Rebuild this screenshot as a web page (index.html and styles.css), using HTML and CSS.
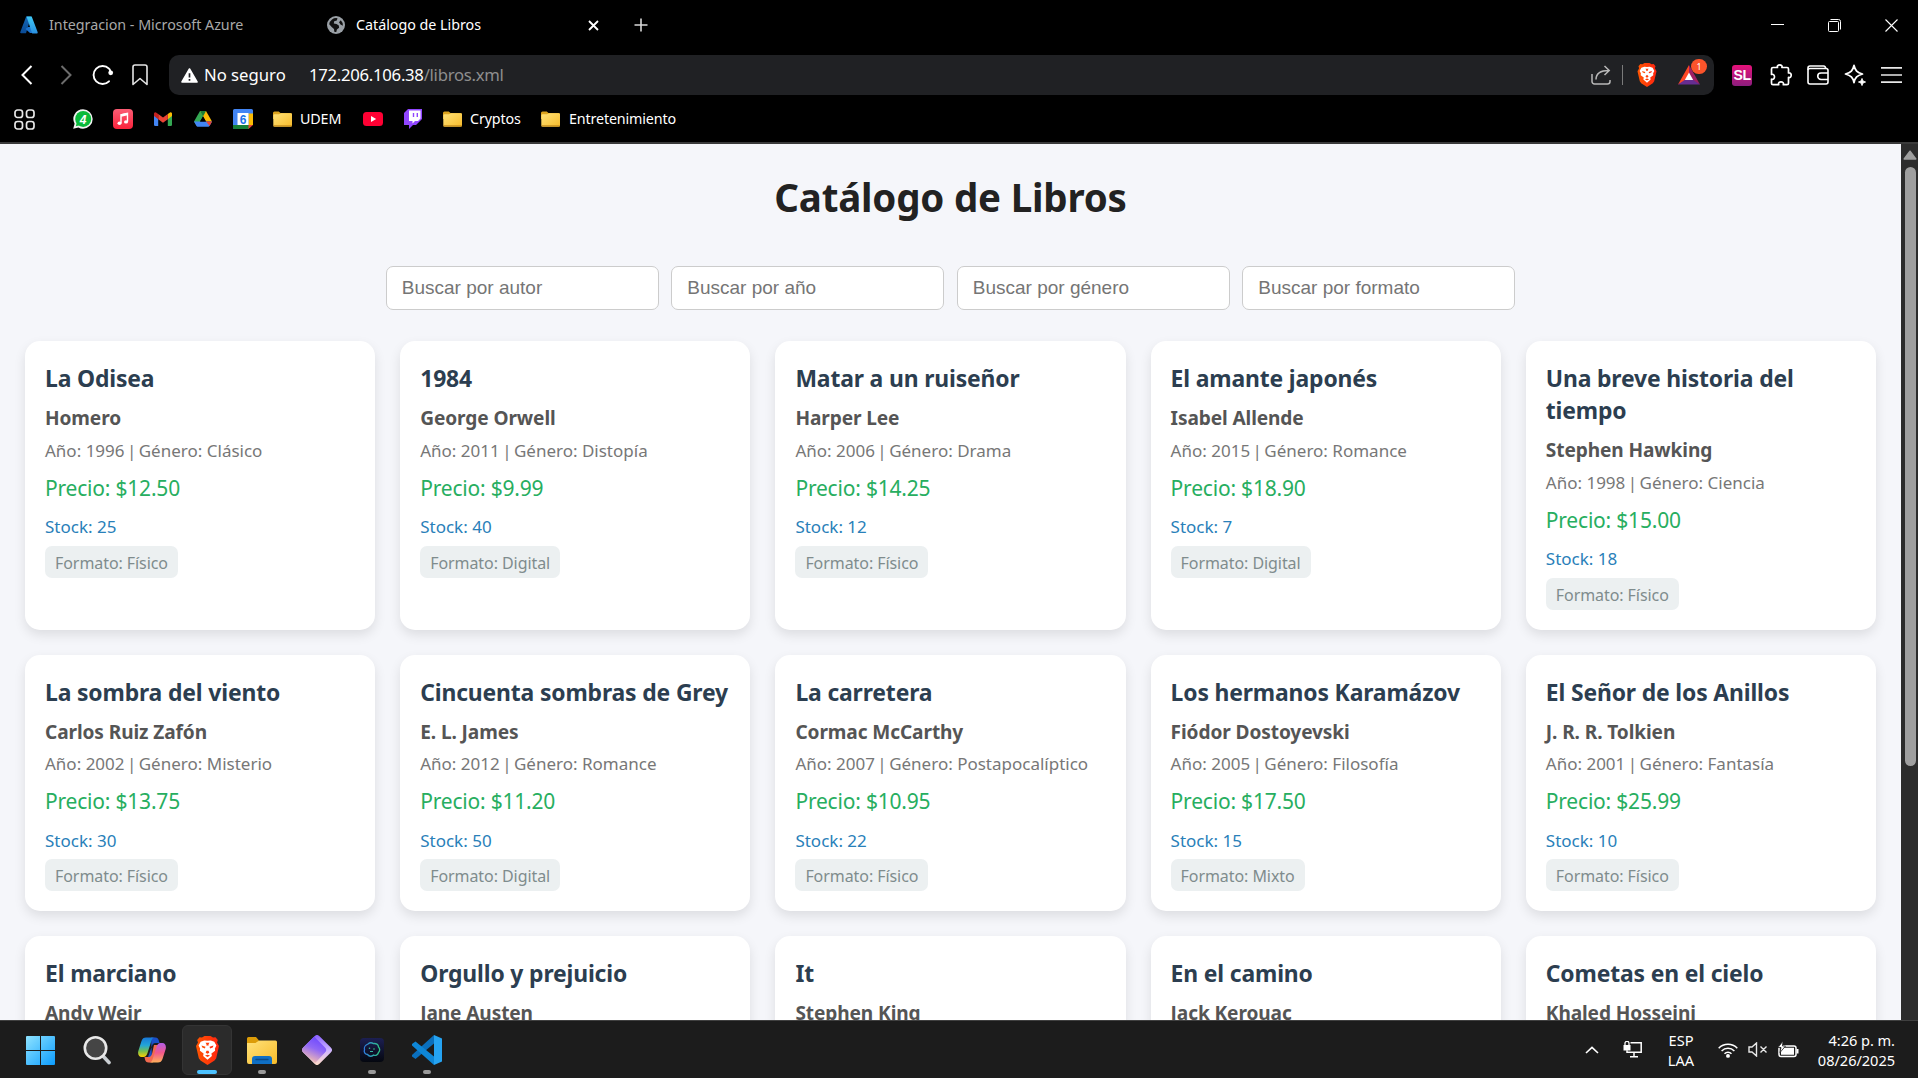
FILE: index.html
```html
<!DOCTYPE html>
<html lang="es">
<head>
<meta charset="utf-8">
<title>Catálogo de Libros</title>
<link rel="stylesheet" href="styles.css">
</head>
<body>
<svg class="defs" aria-hidden="true">
  <defs>
    <linearGradient id="azL" x1="0" y1="0" x2="0" y2="1"><stop offset="0" stop-color="#1568b8"/><stop offset="1" stop-color="#0a4a94"/></linearGradient>
    <linearGradient id="azR" x1="0" y1="0" x2="0" y2="1"><stop offset="0" stop-color="#3fc9f5"/><stop offset="1" stop-color="#2a8fe0"/></linearGradient>
    <linearGradient id="music" x1="0" y1="0" x2="0" y2="1"><stop offset="0" stop-color="#fb5c74"/><stop offset="1" stop-color="#fa233b"/></linearGradient>
    <linearGradient id="fold" x1="0" y1="0" x2="1" y2="1"><stop offset="0" stop-color="#ffe27a"/><stop offset="1" stop-color="#f6bb2a"/></linearGradient>
    <linearGradient id="win" x1="0" y1="0" x2="1" y2="1"><stop offset="0" stop-color="#8fe3ff"/><stop offset="1" stop-color="#0c9dff"/></linearGradient>
    <linearGradient id="brave" x1="0" y1="0" x2="1" y2="0"><stop offset="0" stop-color="#ff5601"/><stop offset="1" stop-color="#ff2410"/></linearGradient>
    <linearGradient id="cpL" x1="0" y1="0" x2="0" y2="1"><stop offset="0" stop-color="#1878d8"/><stop offset=".4" stop-color="#22a5d8"/><stop offset=".7" stop-color="#74bf50"/><stop offset="1" stop-color="#ffd000"/></linearGradient>
    <linearGradient id="cpR" x1="0" y1="0" x2="0" y2="1"><stop offset="0" stop-color="#b35de8"/><stop offset=".5" stop-color="#f2588b"/><stop offset="1" stop-color="#ffb05a"/></linearGradient>
    <linearGradient id="diaR" x1="0" y1="0" x2="0" y2="1"><stop offset="0" stop-color="#8a62ff"/><stop offset=".5" stop-color="#cdb4ff"/><stop offset="1" stop-color="#ffdcc8"/></linearGradient>
    <linearGradient id="diaL" x1=".7" y1="0" x2=".3" y2="1"><stop offset="0" stop-color="#6a45ff"/><stop offset=".45" stop-color="#9068f5"/><stop offset="1" stop-color="#ffc8a8"/></linearGradient>
    <linearGradient id="pet" x1="0" y1="0" x2="0" y2="1"><stop offset="0" stop-color="#1c1f52"/><stop offset="1" stop-color="#04070f"/></linearGradient>
    <linearGradient id="petL" x1="0" y1="0" x2="1" y2="0"><stop offset="0" stop-color="#2f7de0"/><stop offset="1" stop-color="#2fc583"/></linearGradient>
    <symbol id="lion" viewBox="0 0 24 29">
      <path d="M6.500 1.500 9 0h6l2.500 1.500L20 1.300 22.300 4l-.8 2.400L23.500 10l-2.800 12.200-1.700 2.300L12 29l-7-4.500-1.700-2.300L.5 10l2-3.600L1.700 4 4 1.300z" fill="url(#brave)"/>
      <path d="M12 4.800 15.200 4.400 18.800 5.800 20.900 9.600 19.400 12.500 19.600 14.700 15.900 17.600 16.400 20 12 23.800 7.600 20 8.100 17.600 4.400 14.700 4.600 12.500 3.100 9.600 5.200 5.800 8.800 4.400z" fill="#fff"/>
      <path d="M6 9.600 10 10.800l-.6 1.600-2.600-.8zM18 9.600 14 10.800l.6 1.600 2.600-.8zM10 6.800h4l-1 1.500.2 1.200h-2.400l.2-1.200zM11 14.800h2l.8 1.900-1.800 1.100-1.800-1.100zM9.500 19.500l2.500-.8 2.500.8-2.500 1.500z" fill="url(#brave)"/>
    </symbol>
    <symbol id="folder" viewBox="0 0 19 16">
      <path d="M0 2a1.500 1.500 0 0 1 1.500-1.500h4.200L7.500 2H17.500A1.500 1.500 0 0 1 19 3.500V8H0z" fill="#dca31e"/>
      <path d="M.3 4.500A1.200 1.200 0 0 1 1.500 3.300H6L8 2.200h9.700A1.200 1.200 0 0 1 19 3.400v11A1.500 1.500 0 0 1 17.500 15.800H1.800A1.500 1.500 0 0 1 .3 14.300z" fill="url(#fold)"/>
      <path d="M.5 14.800h18.300" stroke="#c99020" stroke-width="1.200"/>
    </symbol>
  </defs>
</svg>

<header class="browser">
  <div class="tabstrip">
    <div class="tab">
      <svg width="18" height="18" viewBox="0 0 18 18"><path d="M6.200.5h5L6 17.300H1.200A1 1 0 0 1 .3 16z" fill="url(#azL)"/><path d="M8 11h6l2 6H10l-4.500-4z" fill="#1d74cf"/><path d="M6.500.5h5.200l6 15.800a1 1 0 0 1-1 1.200h-4.500z" fill="url(#azR)"/></svg>
      <span class="tab-title">Integracion - Microsoft Azure</span>
    </div>
    <div class="tab tab-active">
      <svg width="18" height="18" viewBox="0 0 18 18"><circle cx="9" cy="9" r="9" fill="#9aa0a6"/><path d="M10.500 2.200 9.800 4.500 7.200 5.200 6.800 7.500 9.500 8l2.300 1.500.3 2.300-2.200 1.700L9.300 16a7 7 0 0 1-2-.3L7 13 4.700 11 2.200 8.300A7 7 0 0 1 10.500 2.200zM13.800 4.200 12 6.200l1.500 2.300 2.400 1.300A7 7 0 0 0 13.800 4.200z" fill="#111"/></svg>
      <span class="tab-title">Catálogo de Libros</span>
      <svg class="tab-close" width="11" height="11" viewBox="0 0 11 11"><path d="M1 1l9 9M10 1l-9 9" stroke="#fff" stroke-width="1.800"/></svg>
    </div>
    <svg class="new-tab" width="14" height="14" viewBox="0 0 14 14"><path d="M7 .5v13M.5 7h13" stroke="#d8d8d8" stroke-width="1.600"/></svg>
    <div class="window-controls">
      <svg width="13" height="13" viewBox="0 0 13 13"><path d="M0 5.500h13" stroke="#fff"/></svg>
      <svg width="13" height="13" viewBox="0 0 13 13" fill="none" stroke="#fff"><rect x=".5" y="2.500" width="10" height="10" rx="1"/><path d="M2.500.5h8a2 2 0 0 1 2 2v8"/></svg>
      <svg width="13" height="13" viewBox="0 0 13 13"><path d="M.5.5l12 12M12.500.5l-12 12" stroke="#fff" stroke-width="1.100"/></svg>
    </div>
  </div>

  <div class="toolbar">
    <div class="nav">
      <svg width="12" height="20" viewBox="0 0 12 20"><path d="M10.500 1 1.500 10l9 9" fill="none" stroke="#fff" stroke-width="2"/></svg>
      <svg width="12" height="20" viewBox="0 0 12 20"><path d="M1.500 1l9 9-9 9" fill="none" stroke="#6c6c6c" stroke-width="2"/></svg>
      <svg width="22" height="20" viewBox="0 0 22 20"><path d="M17 3.700A9 9 0 1 0 17 16.300M17.500 4.200 19 7.500" fill="none" stroke="#fff" stroke-width="1.900" stroke-linecap="round"/><circle cx="18.700" cy="7.800" r="2.400" fill="#fff"/></svg>
      <svg width="16" height="22" viewBox="0 0 16 22"><path d="M1 3a2 2 0 0 1 2-2h10a2 2 0 0 1 2 2v17.500L8 14.500 1 20.500z" fill="none" stroke="#e4e4e4" stroke-width="1.600" stroke-linejoin="round"/></svg>
    </div>
    <div class="omnibox">
      <svg width="17" height="15" viewBox="0 0 17 15"><path d="M8.500 1 16 14H1z" fill="#fff" stroke="#fff" stroke-width="1.600" stroke-linejoin="round"/><path d="M8.500 5.300v4.200M8.500 11v1.800" stroke="#202124" stroke-width="1.700"/></svg>
      <span class="insecure">No seguro</span>
      <span class="url"><span class="host">172.206.106.38</span>/libros.xml</span>
      <div class="omni-actions">
        <svg width="20" height="20" viewBox="0 0 20 20" fill="none" stroke="#b8b8b8" stroke-width="1.500"><path d="M1 9v7.500A2.500 2.500 0 0 0 3.500 19h13a2.500 2.500 0 0 0 2.500-2.500V15"/><path d="M5 14.500C5 8.500 9 5.500 18 5.500M13.500 1l4.700 4.500-4.700 4.500"/></svg>
        <span class="divider"></span>
        <svg class="shield" width="20" height="24"><use href="#lion" width="20" height="24"/></svg>
        <div class="rewards">
          <svg width="22" height="20" viewBox="0 0 22 20"><path d="M11 0 0 19.500 11 14z" fill="#ff4724"/><path d="M11 0 22 19.500 11 14z" fill="#9e1f63"/><path d="M0 19.500h22L11 12z" fill="#662d91"/><path d="M11 7.500 15.200 15H6.800z" fill="#fff"/></svg>
          <span class="badge">1</span>
        </div>
      </div>
    </div>
    <div class="extensions">
      <span class="sl-ext">SL</span>
      <svg width="22" height="22" viewBox="0 0 22 22" fill="none" stroke="#fff" stroke-width="1.700" stroke-linejoin="round"><path d="M3 3.500H7.500C6.800 1.800 8.200.9 9.700.9s2.900.9 2.200 2.600H17a1.500 1.500 0 0 1 1.500 1.500V9c1.700-.6 2.700.8 2.700 2.200s-1 2.800-2.700 2.200v5.800A1.500 1.500 0 0 1 17 20.700h-3.700c.6-1.900-.8-2.900-2.300-2.900s-2.900 1-2.300 2.900H3a1.500 1.500 0 0 1-1.500-1.500v-4c1.900.6 3-.8 3-2.400s-1.100-3-3-2.400V5A1.500 1.500 0 0 1 3 3.500z"/></svg>
      <svg width="22" height="20" viewBox="0 0 22 20" fill="none" stroke="#fff" stroke-width="1.600"><rect x="1" y="3.500" width="20" height="15.500" rx="2"/><path d="M1 5V3a2 2 0 0 1 2-2h13.500a2 2 0 0 1 2 2.500M21 8h-7a3.200 3.200 0 0 0 0 6.500h7"/></svg>
      <svg width="22" height="22" viewBox="0 0 22 22"><path d="M10 1.500c1.200 5 3 7 8.500 8.500-5.500 1.500-7.300 3.500-8.500 8.500C8.800 13.500 7 11.500 1.500 10 7 8.500 8.800 6.500 10 1.500z" fill="none" stroke="#fff" stroke-width="1.800" stroke-linejoin="round"/><path d="M18 14.500c.5 2.300 1.200 3 3.500 3.500-2.300.5-3 1.200-3.500 3.500-.5-2.300-1.200-3-3.500-3.500 2.300-.5 3-1.200 3.500-3.500z" fill="#fff" stroke="#fff"/></svg>
      <svg width="21" height="18" viewBox="0 0 21 18"><path d="M0 1.800h21M0 9h21M0 16.200h21" stroke="#e8e8e8" stroke-width="1.700"/></svg>
    </div>
  </div>

  <nav class="bookmarks">
    <svg class="apps" width="21" height="21" viewBox="0 0 21 21" fill="none" stroke="#e8e8e8" stroke-width="1.700"><rect x="1" y="1" width="7.500" height="7.500" rx="2.500"/><rect x="12.500" y="1" width="7.500" height="7.500" rx="2.500"/><rect x="1" y="12.500" width="7.500" height="7.500" rx="2.500"/><rect x="12.500" y="12.500" width="7.500" height="7.500" rx="2.500"/></svg>
    <svg class="bm-icon" width="20" height="20" viewBox="0 0 20 20"><path d="M10 .3A9.700 9.700 0 0 1 10 19.700a10 10 0 0 1-4.600-1.200L.2 19.800l1.400-5A9.700 9.700 0 0 1 10 .3z" fill="#f2f2f2"/><circle cx="10.200" cy="9.900" r="8" fill="#09ba3a"/><path d="M2.800 17.300l1-4 3 3z" fill="#09ba3a"/><text x="10" y="14.500" text-anchor="middle" class="wa-count">4</text></svg>
    <svg class="bm-icon" width="20" height="20" viewBox="0 0 20 20"><rect width="20" height="20" rx="4" fill="url(#music)"/><path d="M8 14V5.800l6.500-1.500v8.400" fill="none" stroke="#fff" stroke-width="1.400"/><path d="M8 6.500l6.500-1.500" stroke="#fff" stroke-width="2.400"/><ellipse cx="6.500" cy="14.300" rx="2" ry="1.700" fill="#fff"/><ellipse cx="13" cy="12.900" rx="2" ry="1.700" fill="#fff"/></svg>
    <svg class="bm-icon" width="20" height="20" viewBox="0 0 20 20"><path d="M1 5.500 5.200 8.500V17H2.300A1.300 1.300 0 0 1 1 15.700z" fill="#4285f4"/><path d="M19 5.500 14.800 8.500V17h2.900a1.300 1.300 0 0 0 1.300-1.300z" fill="#34a853"/><path d="M14.800 5 17 3.500a1.300 1.300 0 0 1 2 1.200V7l-4.200 3.200z" fill="#fbbc04"/><path d="M5.200 5 10 8.600 14.800 5v5.200L10 13.800 5.200 10.200z" fill="#ea4335"/><path d="M1 4.700a1.300 1.300 0 0 1 2-1.200L5.200 5v5.200L1 7z" fill="#c5221f"/></svg>
    <svg class="bm-icon" width="20" height="20" viewBox="0 0 20 20"><path d="M7 2h6l-3 5.500-5.800 10L1 12.500z" fill="#34a853"/><path d="M7 2h6l6 10.500h-6z" fill="#fbbc04"/><path d="M1 12.500h18L16.500 17a1.500 1.500 0 0 1-1.200.7H4.700a1.500 1.500 0 0 1-1.200-.7z" fill="#4285f4"/><path d="M13 12.500h6l-2.500 4.600z" fill="#ea4335"/><path d="M7 2l3 5.500L13 2z" fill="#188038"/><path d="M10 7.500 7.100 12.500h5.800z" fill="#000"/></svg>
    <svg class="bm-icon" width="20" height="20" viewBox="0 0 20 20"><path d="M1.500 0h17A1.500 1.500 0 0 1 20 1.500V15l-5 5H1.500A1.500 1.500 0 0 1 0 18.500v-17A1.500 1.500 0 0 1 1.500 0z" fill="#4285f4"/><path d="M15.500 4.500H20V16h-4.500z" fill="#fbbc04"/><path d="M0 16h16v4H1.500A1.500 1.500 0 0 1 0 18.500z" fill="#188038"/><path d="M15.500 16H20l-4.500 4z" fill="#ea4335"/><path d="M4.500 4h11v12h-11z" fill="#fff"/><text x="9.900" y="14.500" text-anchor="middle" class="cal-day">6</text></svg>
    <a class="bm-folder"><svg width="19" height="16"><use href="#folder" width="19" height="16"/></svg><span>UDEM</span></a>
    <svg class="bm-yt" width="20" height="14" viewBox="0 0 20 14"><rect width="20" height="14" rx="3.500" fill="#ff0033"/><path d="M8 4l5.200 3L8 10z" fill="#fff"/></svg>
    <svg class="bm-twitch" width="18" height="20" viewBox="0 0 18 20"><path d="M4 0h14v10l-6 6H9l-4 4v-4H0V4z" fill="#9146ff"/><path d="M5 1.500h11.500v8L14 12h-3l-2.500 2.500V12H5z" fill="#fff"/><path d="M9.500 4v4M13.300 4v4" stroke="#9146ff" stroke-width="1.400"/></svg>
    <a class="bm-folder bm-cryptos"><svg width="19" height="16"><use href="#folder" width="19" height="16"/></svg><span>Cryptos</span></a>
    <a class="bm-folder bm-ent"><svg width="19" height="16"><use href="#folder" width="19" height="16"/></svg><span>Entretenimiento</span></a>
  </nav>
</header>

<div class="viewport">
  <main class="page">
    <h1>Catálogo de Libros</h1>
    <form class="filters">
      <input type="text" placeholder="Buscar por autor">
      <input type="text" placeholder="Buscar por año">
      <input type="text" placeholder="Buscar por género">
      <input type="text" placeholder="Buscar por formato">
    </form>
    <section class="grid">
      <article class="card"><h2>La Odisea</h2><h3>Homero</h3><p class="meta">Año: 1996 <span class="bar">|</span> Género: Clásico</p><p class="price">Precio: $12.50</p><p class="stock">Stock: 25</p><span class="format">Formato: Físico</span></article>
      <article class="card"><h2>1984</h2><h3>George Orwell</h3><p class="meta">Año: 2011 <span class="bar">|</span> Género: Distopía</p><p class="price">Precio: $9.99</p><p class="stock">Stock: 40</p><span class="format">Formato: Digital</span></article>
      <article class="card"><h2>Matar a un ruiseñor</h2><h3>Harper Lee</h3><p class="meta">Año: 2006 <span class="bar">|</span> Género: Drama</p><p class="price">Precio: $14.25</p><p class="stock">Stock: 12</p><span class="format">Formato: Físico</span></article>
      <article class="card"><h2>El amante japonés</h2><h3>Isabel Allende</h3><p class="meta">Año: 2015 <span class="bar">|</span> Género: Romance</p><p class="price">Precio: $18.90</p><p class="stock">Stock: 7</p><span class="format">Formato: Digital</span></article>
      <article class="card"><h2>Una breve historia del tiempo</h2><h3>Stephen Hawking</h3><p class="meta">Año: 1998 <span class="bar">|</span> Género: Ciencia</p><p class="price">Precio: $15.00</p><p class="stock">Stock: 18</p><span class="format">Formato: Físico</span></article>
      <article class="card"><h2>La sombra del viento</h2><h3>Carlos Ruiz Zafón</h3><p class="meta">Año: 2002 <span class="bar">|</span> Género: Misterio</p><p class="price">Precio: $13.75</p><p class="stock">Stock: 30</p><span class="format">Formato: Físico</span></article>
      <article class="card"><h2>Cincuenta sombras de Grey</h2><h3>E. L. James</h3><p class="meta">Año: 2012 <span class="bar">|</span> Género: Romance</p><p class="price">Precio: $11.20</p><p class="stock">Stock: 50</p><span class="format">Formato: Digital</span></article>
      <article class="card"><h2>La carretera</h2><h3>Cormac McCarthy</h3><p class="meta">Año: 2007 <span class="bar">|</span> Género: Postapocalíptico</p><p class="price">Precio: $10.95</p><p class="stock">Stock: 22</p><span class="format">Formato: Físico</span></article>
      <article class="card"><h2>Los hermanos Karamázov</h2><h3>Fiódor Dostoyevski</h3><p class="meta">Año: 2005 <span class="bar">|</span> Género: Filosofía</p><p class="price">Precio: $17.50</p><p class="stock">Stock: 15</p><span class="format">Formato: Mixto</span></article>
      <article class="card"><h2>El Señor de los Anillos</h2><h3>J. R. R. Tolkien</h3><p class="meta">Año: 2001 <span class="bar">|</span> Género: Fantasía</p><p class="price">Precio: $25.99</p><p class="stock">Stock: 10</p><span class="format">Formato: Físico</span></article>
      <article class="card"><h2>El marciano</h2><h3>Andy Weir</h3></article>
      <article class="card"><h2>Orgullo y prejuicio</h2><h3>Jane Austen</h3></article>
      <article class="card"><h2>It</h2><h3>Stephen King</h3></article>
      <article class="card"><h2>En el camino</h2><h3>Jack Kerouac</h3></article>
      <article class="card"><h2>Cometas en el cielo</h2><h3>Khaled Hosseini</h3></article>
    </section>
  </main>
  <div class="scrollbar">
    <svg width="14" height="10" viewBox="0 0 14 10"><path d="M7 1.200 12.800 9H1.200z" fill="#9f9f9f" stroke="#9f9f9f" stroke-width="1.500" stroke-linejoin="round"/></svg>
    <div class="thumb"></div>
  </div>
</div>

<footer class="taskbar">
  <div class="apps-row">
    <div class="app app-start"><svg width="29" height="29" viewBox="0 0 29 29"><path d="M1 0h13v14H0V1a1 1 0 0 1 1-1zM15 0h13a1 1 0 0 1 1 1v13H15zM0 15h14v14H1a1 1 0 0 1-1-1zM15 15h14v13a1 1 0 0 1-1 1H15z" fill="url(#win)"/></svg></div>
    <div class="app"><svg width="28" height="29" viewBox="0 0 28 29"><path d="M19 19l7 7.500" stroke="#c9ced2" stroke-width="3.600" stroke-linecap="round"/><circle cx="12.500" cy="12" r="10.700" fill="#454545" stroke="#e8e8e8" stroke-width="2.600"/></svg></div>
    <div class="app"><svg width="28" height="26" viewBox="0 0 28 26"><path d="M13 .5h4.500c2 0 3 1.500 3.600 4l.4 1.500h-4c-2 0-3 1-3.700 3.500L10 20h4z" fill="#1a4fc8"/><path d="M15 25.500h-4.500c-2 0-3-1-3.500-3L6.500 20h4.200c2 0 2.800-1.500 3.400-3.500L16 8h4z" fill="#f26a50"/><path d="M8 .5h9c-2.500 0-3.300 2-4 4.500L9.500 16c-.9 2.800-2 4-4 4H3.500C1 20-.5 17.500.3 14L3.500 4C4.300 1.500 5.800.5 8 .5z" fill="url(#cpL)"/><path d="M20 25.500h-9c2.500 0 3.300-2 4-4.500l3.500-11c.9-2.800 2-4 4-4h2c2.500 0 4 2.500 3.200 6L24.500 22c-.8 2.500-2.300 3.500-4.500 3.500z" fill="url(#cpR)"/></svg></div>
    <div class="app app-active"><svg width="25" height="29"><use href="#lion" width="25" height="29"/></svg></div>
    <div class="app running"><svg width="30" height="27" viewBox="0 0 30 27"><path d="M0 1.500A1.500 1.500 0 0 1 1.500 0H9l3 3.500L10 6H0z" fill="#dc9c08"/><path d="M0 6h8.500L12 3.500h16.500A1.500 1.500 0 0 1 30 5v20a2 2 0 0 1-2 2H2a2 2 0 0 1-2-2z" fill="url(#fold)"/><path d="M5 27v-5a3 3 0 0 1 3-3h14a3 3 0 0 1 3 3v5z" fill="#0f6fc4"/><path d="M9 22.500h12" stroke="#0a4a86" stroke-width="1.300" stroke-linecap="round"/></svg></div>
    <div class="app"><svg width="30" height="30" viewBox="0 0 30 30"><path d="M12.500 1.200a3.500 3.500 0 0 1 5 0L28.800 12.500a3.500 3.500 0 0 1 0 5L17.500 28.800a3.500 3.500 0 0 1-5 0L1.200 17.500a3.500 3.500 0 0 1 0-5z" fill="url(#diaR)"/><path d="M12.200 1.500 23 12.500a3.500 3.500 0 0 1 0 5L13.200 28 1.200 17.500a3.500 3.500 0 0 1 0-5z" fill="url(#diaL)"/></svg></div>
    <div class="app running"><svg width="24" height="24" viewBox="0 0 24 24"><rect width="24" height="24" rx="4" fill="url(#pet)"/><path d="M8 6c2-1.800 4-1.300 5.500-.4 2.500-.4 5 .8 5 3.400 1.600 1.500 1.600 4 0 5.500-.6 2.500-3 3.500-5 2.600-2 1.400-4.600 1.200-6-.6-2.700-.2-3.800-2.500-3-4.700C3.800 9.500 5.500 7 8 6z" fill="none" stroke="url(#petL)" stroke-width="1.300"/><circle cx="9.500" cy="10.300" r=".8" fill="#35b8a0"/><circle cx="14" cy="11" r=".8" fill="#35c583"/><path d="M10 13.500h3" stroke="#35b8a0"/></svg></div>
    <div class="app running"><svg width="30" height="30" viewBox="0 0 30 30"><path d="M22 0 30 3.500V26.500L22 30z" fill="#25a3f2"/><path d="M22 0v8.500L3.500 24 0 21.500V20z" fill="#0a6fbd"/><path d="M22 30v-8.500L3.500 6.500 0 9v1.500z" fill="#0e86d6"/></svg></div>
  </div>
  <div class="tray">
    <svg class="tray-up" width="14" height="8" viewBox="0 0 14 8"><path d="M1 7l6-5.700L13 7" fill="none" stroke="#fff" stroke-width="1.600"/></svg>
    <svg class="tray-net" width="19" height="17" viewBox="0 0 19 17"><path d="M7.500 1.800h10.700v9.500H4v-2M11 11.300v4M7 15.700h8" fill="none" stroke="#fff" stroke-width="1.500"/><path d="M2 4.500V2.300a2 2 0 0 1 4 0v2.200" fill="none" stroke="#fff" stroke-width="1.300"/><rect x=".5" y="4" width="7" height="5.500" fill="#fff"/></svg>
    <div class="lang"><span>ESP</span><span>LAA</span></div>
    <svg class="tray-wifi" width="20" height="16" viewBox="0 0 20 16" fill="none" stroke="#fff" stroke-width="1.500"><path d="M.7 6.200a13 13 0 0 1 18.600 0M3.600 9a9 9 0 0 1 12.800 0M6.500 11.800a5 5 0 0 1 7 0"/><circle cx="10" cy="13.900" r="1.200" fill="#fff"/></svg>
    <svg class="tray-vol" width="20" height="15" viewBox="0 0 20 15" fill="none" stroke="#e8e8e8" stroke-width="1.400"><path d="M1 5h3l4.500-4v13L4 10H1zM12.500 4.500l6 6M18.500 4.500l-6 6"/></svg>
    <svg class="tray-bat" width="21" height="17" viewBox="0 0 21 17"><rect x="1" y="5" width="17" height="10.500" rx="2" fill="none" stroke="#fff" stroke-width="1.500"/><path d="M19.500 8v4.500" stroke="#fff" stroke-width="2"/><path d="M3 13.800V9l3-2.200h10v7z" fill="#fff"/><path d="M5 0 0 6.500h3L2 11.500l5.500-6.500H4.500z" fill="#fff" stroke="#1c1c1c" stroke-width=".8"/></svg>
    <div class="clock"><span>4:26 p. m.</span><span>08/26/2025</span></div>
  </div>
</footer>
</body>
</html>
```
FILE: styles.css
```css
* { box-sizing: border-box; }
body {
  margin: 0;
  width: 1918px;
  height: 1078px;
  overflow: hidden;
  display: flex;
  flex-direction: column;
  font-family: "Noto Sans", "Open Sans", sans-serif;
  background: #000;
}
svg { display: block; flex: none; }
.defs { position: absolute; width: 0; height: 0; }

/* browser chrome */
.browser {
  height: 144px;
  flex: none;
  color: #fff;
  border-bottom: 2px solid #3a3a3a;
}
.tabstrip { display: flex; align-items: center; height: 50px; padding-left: 20px; }
.tab { display: flex; align-items: center; gap: 11px; width: 307px; font-size: 14.300px; letter-spacing: -.02px; color: #a8a8a8; white-space: nowrap; }
.tab-title { padding-bottom: 2px; }
.tab-active { gap: 11px; width: 272px; color: #fff; }
.tab-close { margin-left: auto; }
.new-tab { margin-left: 35px; }
.window-controls { display: flex; gap: 44px; margin-left: auto; margin-right: 20px; }

.toolbar { display: flex; align-items: center; height: 50px; padding-left: 21px; }
.nav { display: flex; align-items: center; width: 148px; }
.nav svg:nth-child(2) { margin-left: 27px; }
.nav svg:nth-child(3) { margin-left: 20px; }
.nav svg:nth-child(4) { margin-left: 18px; }
.omnibox { display: flex; align-items: center; width: 1545px; height: 40px; padding: 0 14px 0 12px; border-radius: 10px; background: #202124; font-size: 16.700px; white-space: nowrap; }
.insecure { margin-left: 6px; width: 105px; padding-bottom: 2px; }
.url { padding-bottom: 2px; color: #8e8e8e; letter-spacing: -.27px; }
.host { color: #fff; }
.omni-actions { display: flex; align-items: center; margin-left: auto; }
.divider { width: 1px; height: 20px; margin: 0 14px 0 11px; background: #7a7a7a; }
.rewards { position: relative; margin-left: 21px; }
.badge { position: absolute; left: 13px; top: -6px; width: 16px; height: 15px; border-radius: 8px; background: #fb542b; font-size: 9px; line-height: 15px; text-align: center; }
.extensions { display: flex; align-items: center; margin-left: 18px; gap: 15px; }
.sl-ext { width: 20px; height: 21px; margin-right: 3px; border-radius: 3px; background: linear-gradient(#e6127a, #8c1d7e); font: bold 14px/21px "Liberation Sans", Arial, sans-serif; text-align: center; letter-spacing: -.5px; }

.bookmarks { display: flex; align-items: center; height: 38px; padding-left: 14px; font-size: 14.300px; letter-spacing: -.15px; }
.apps { margin-right: 18px; }
.bm-icon { margin-left: 20px; }
.bm-folder { display: flex; align-items: center; gap: 8px; width: 70px; margin-left: 20px; white-space: nowrap; }
.bm-folder span { padding-bottom: 2px; }
.bm-yt { margin-left: 20px; }
.bm-twitch { margin-left: 21px; }
.bm-cryptos { width: 78px; margin-left: 21px; }
.bm-ent { gap: 9px; width: 140px; margin-left: 20px; }
.wa-count { font: bold italic 12px "Liberation Sans", Arial, sans-serif; fill: #fff; }
.cal-day { font: bold 12px "Liberation Sans", Arial, sans-serif; fill: #1a73e8; }

/* document */
.viewport { display: flex; height: 876px; flex: none; background: #f5f6fa; overflow: hidden; }
.page { width: 1901px; padding: 26px 25px 0; }
h1 { margin: 0; height: 54px; font-size: 38.500px; line-height: 54px; color: #222; text-align: center; letter-spacing: -.2px; }
.filters { display: flex; justify-content: center; gap: 12.500px; margin: 42px 0 31px; }
.filters input { width: 273px; height: 44px; padding: 0 15px; border: 1px solid #ccc; border-radius: 7px; background: #fff; font: 19px "Liberation Sans", Arial, sans-serif; }
.filters input::placeholder { color: #757575; }
.grid { display: grid; grid-template-columns: repeat(5, 1fr); gap: 25px; }
.card { padding: 22px 20px 20px; border-radius: 15px; background: #fff; box-shadow: 0 5px 12px rgba(0, 0, 0, .1); }
.card h2 { margin: 0 0 10px; font-size: 22.900px; line-height: 32px; color: #2c3e50; letter-spacing: -.15px; }
.card h3 { margin: 0 0 7.500px; font-size: 19.100px; line-height: 26px; color: #555; letter-spacing: -.1px; }
.card p { margin: 0; white-space: nowrap; }
.card .meta { font-size: 17px; line-height: 24px; color: #777; }
.bar { margin: 0 -2px; }
.card .price { margin-top: 10px; font-size: 21px; line-height: 30px; color: #27ae60; letter-spacing: -.2px; }
.card .stock { margin: 12.500px 0 6.500px; font-size: 17px; line-height: 24px; color: #2980b9; }
.format { display: block; width: max-content; height: 32px; padding: 0 10px; border-radius: 7px; background: #ecf0f1; font-size: 16px; line-height: 34px; color: #7f8c8d; letter-spacing: -.07px; }

.scrollbar { display: flex; flex-direction: column; align-items: center; width: 17px; padding: 6px 0 0 1px; background: #2c2c2c; }
.thumb { width: 11px; height: 599px; margin-top: 7px; border-radius: 6px; background: #9f9f9f; }

/* taskbar */
.taskbar { display: flex; justify-content: space-between; height: 58px; padding: 0 23px 0 17px; background: #1c1c1c; border-top: 1px solid #404040; color: #fff; }
.apps-row { display: flex; gap: 5px; padding-top: 4px; }
.app { position: relative; display: flex; align-items: center; justify-content: center; width: 50px; height: 50px; border: 1px solid transparent; border-radius: 6px; }
.app-start { padding-right: 3px; }
.app-active { background: #2b2b2b; border-color: #343434; }
.app-active::after, .running::after { content: ""; position: absolute; bottom: 0; width: 8px; height: 4px; border-radius: 2px; background: #9a9a9a; }
.app-active::after { width: 20px; background: #4cc2ff; }
.tray { display: flex; align-items: center; font-size: 14.600px; line-height: 20px; }
.tray-net { margin-left: 24px; }
.lang, .clock { display: flex; flex-direction: column; margin-top: 1px; }
.lang { align-items: center; width: 30px; margin-left: 24px; }
.tray-wifi { margin-left: 22px; }
.tray-vol { margin-left: 10px; }
.tray-bat { margin-left: 10px; }
.clock { align-items: flex-end; width: 96px; letter-spacing: -.05px; }
```
